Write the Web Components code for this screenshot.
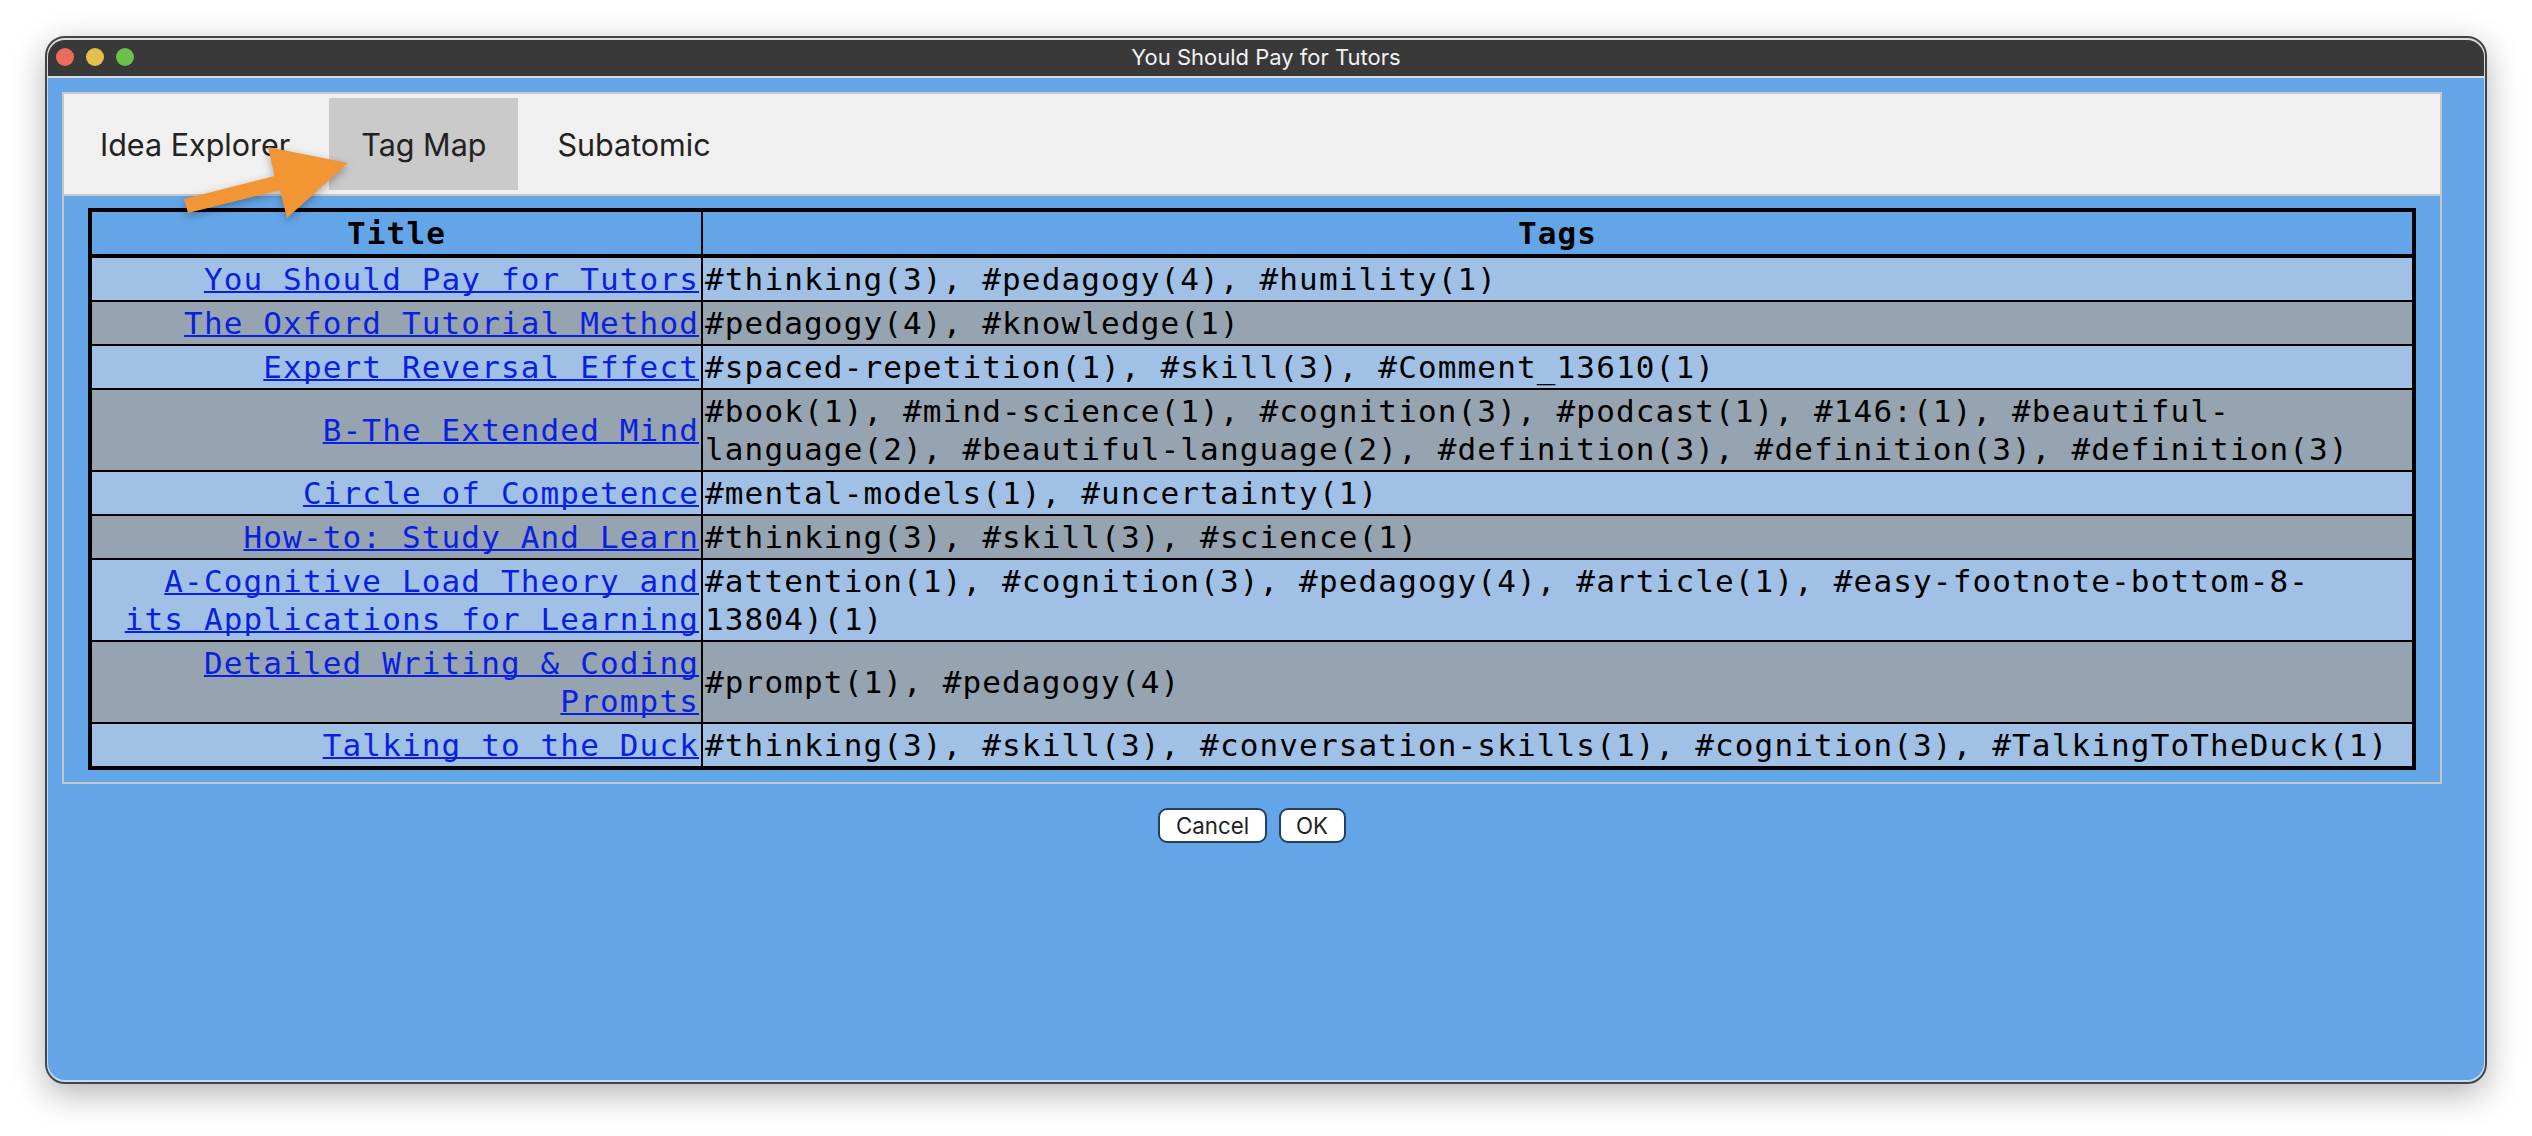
<!DOCTYPE html>
<html><head><meta charset="utf-8"><style>
html,body{margin:0;background:#fff}
body{padding:36px 45px 52px;height:1136px;box-sizing:border-box;font-family:"Inter","Liberation Sans",sans-serif}
</style></head><body>
<app-window heading="You Should Pay for Tutors">
  <tag-panel>
    <tab-bar slot="tabs"><tab-item>Idea Explorer</tab-item><tab-item active>Tag Map</tab-item><tab-item>Subatomic</tab-item></tab-bar>
    <tag-table></tag-table>
  </tag-panel>
  <dialog-actions><ui-button>Cancel</ui-button><ui-button>OK</ui-button></dialog-actions>
  <call-arrow slot="overlay"></call-arrow>
</app-window>
<script>
function def(name, css, html, extra){
  customElements.define(name, class extends HTMLElement{
    constructor(){super();const r=this.attachShadow({mode:'open'});r.innerHTML='<style>'+css+'</style>'+html;}
    connectedCallback(){ if(extra) extra.call(this,this.shadowRoot); }
  });
}
def('app-window',`
:host{display:flex;flex-direction:column;position:relative;box-sizing:border-box;height:1048px;border:2px solid #444;border-radius:20px;
 background:linear-gradient(#dcdcdc 0 40px,#bcdcf8 40px);padding:2px 1px;box-shadow:0 10px 34px rgba(0,0,0,.3)}
.bar{flex:none;height:36px;box-sizing:border-box;padding-bottom:2px;background:#393939;border-radius:17px 17px 0 0;display:flex;align-items:center;justify-content:center;position:relative;margin-bottom:2px;
 color:#f2f2f2;font:22px/34px "Inter","Liberation Sans",sans-serif}
.lights{position:absolute;left:8px;top:8px;display:flex;gap:12px}
.lights i{display:block;width:18px;height:18px;border-radius:50%}
.content{flex:1;background:#64a5e8;padding:14px 42px 0 14px;border-radius:0 0 17px 17px}
`,`<div class="bar"><div class="lights"><i style="background:#ee6a5f"></i><i style="background:#e3c04c"></i><i style="background:#6cbf47"></i></div><span id="t"></span></div>
<div class="content"><slot></slot></div><slot name="overlay"></slot>`,function(r){r.getElementById('t').textContent=this.getAttribute('heading');});
def('tag-panel',`
:host{display:block;border:2px solid #c8c8c8;background:#64a5e8}
.body{padding:12px 24px}
`,`<slot name="tabs"></slot><div class="body"><slot></slot></div>`);
def('tab-bar',`
:host{display:flex;gap:7px;background:#f0f0f0;border-bottom:2px solid #c8c8c8;padding:4px;height:102px;box-sizing:border-box}
`,`<slot></slot>`);
def('tab-item',`
:host{display:flex;align-items:center;height:92px;box-sizing:border-box;padding:0 32px;font:30.5px "Inter","Liberation Sans",sans-serif;color:#222}
:host([active]){background:#cacaca}
`,`<slot></slot>`);
const rows=[
["You Should Pay for Tutors","#thinking(3), #pedagogy(4), #humility(1)"],
["The Oxford Tutorial Method","#pedagogy(4), #knowledge(1)"],
["Expert Reversal Effect","#spaced-repetition(1), #skill(3), #Comment_13610(1)"],
["B-The Extended Mind","#book(1), #mind-science(1), #cognition(3), #podcast(1), #146:(1), #beautiful-language(2), #beautiful-language(2), #definition(3), #definition(3), #definition(3)"],
["Circle of Competence","#mental-models(1), #uncertainty(1)"],
["How-to: Study And Learn","#thinking(3), #skill(3), #science(1)"],
["A-Cognitive Load Theory and its Applications for Learning","#attention(1), #cognition(3), #pedagogy(4), #article(1), #easy-footnote-bottom-8-13804)(1)"],
["Detailed Writing & Coding Prompts","#prompt(1), #pedagogy(4)"],
["Talking to the Duck","#thinking(3), #skill(3), #conversation-skills(1), #cognition(3), #TalkingToTheDuck(1)"]];
def('tag-table',`
:host{display:block}
table{width:100%;table-layout:fixed;border-collapse:separate;border-spacing:0;border:4px solid #000;font:31px/38px "DejaVu Sans Mono",monospace;letter-spacing:1.14px;color:#000;background:#64a5e8}
col.a{width:611px}
th,td{padding:2px;vertical-align:middle}
th{font-weight:700;text-align:center;border-bottom:4px solid #000}
th:first-child,td:first-child{border-right:2px solid #000}
tr+tr td{border-top:2px solid #000}
tbody tr:first-child td{border-top:0}
td:first-child{text-align:right}
tr.l td{background:#a1c0e6}
tr.d td{background:#96a3b0}
a{color:#0a1fe0;text-decoration:underline;text-decoration-skip-ink:none;text-decoration-thickness:2px}
`,`<table><colgroup><col class="a"><col></colgroup><thead><tr><th>Title</th><th>Tags</th></tr></thead><tbody id="b"></tbody></table>`,function(r){
  const b=r.getElementById('b');
  rows.forEach((x,i)=>{const tr=document.createElement('tr');tr.className=i%2?'d':'l';
    const a=document.createElement('td'),l=document.createElement('a');l.href='#';l.textContent=x[0];a.append(l);
    const c=document.createElement('td');c.textContent=x[1];tr.append(a,c);b.append(tr);});
});
def('dialog-actions',`
:host{display:flex;justify-content:center;gap:12px;margin-top:24px}
`,`<slot></slot>`);
def('ui-button',`
:host{display:flex;align-items:center;height:35px;box-sizing:border-box;padding:0 15.5px;background:#fff;border:2px solid #23415f;border-radius:9px;font:22.3px "Inter","Liberation Sans",sans-serif;color:#222}
`,`<slot></slot>`);
def('call-arrow',`
:host{position:absolute;left:0;top:0;width:0;height:0;pointer-events:none}
svg{position:absolute;left:-47px;top:-38px;overflow:visible;filter:drop-shadow(0 3px 4px rgba(0,0,0,.3))}
`,`<svg width="400" height="240" viewBox="0 0 400 240"><polygon fill="#f29635" points="348,163 268,147 274.5,176 184,199 188,213 280,190 287,218"/></svg>`);
</script>
</body></html>
